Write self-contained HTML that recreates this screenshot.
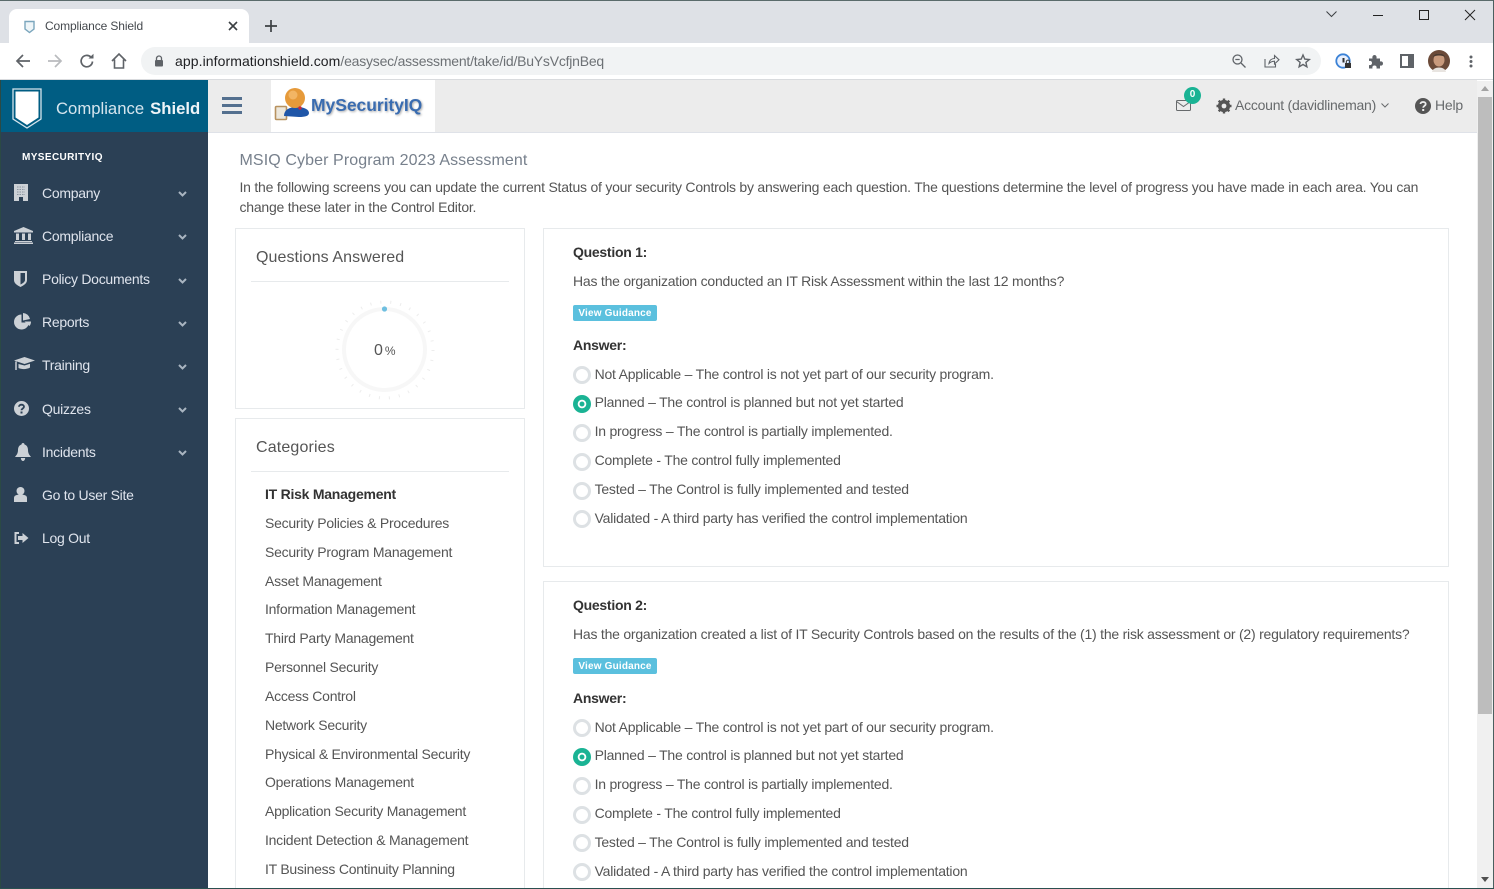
<!DOCTYPE html>
<html><head><meta charset="utf-8"><title>Compliance Shield</title>
<style>
*{box-sizing:border-box}
html,body{margin:0;padding:0;width:1494px;height:889px;overflow:hidden;background:#fff;font-family:"Liberation Sans",Arial,sans-serif;font-size:14px;color:#676a6c}
#w{position:relative;width:1494px;height:889px;overflow:hidden}
.a{position:absolute;white-space:nowrap}
svg{position:absolute;overflow:visible}
.nav{color:#dfe4ed;font-size:14px;left:42px;letter-spacing:-.27px}
.cat{left:265px;color:#555;font-size:14px;letter-spacing:-.245px}
.q{left:573px;color:#333;font-weight:bold;font-size:14px;letter-spacing:-.27px}
.t{color:#555;font-size:14px;left:594.600px;letter-spacing:-.222px}
.r{position:absolute;left:573px;width:18px;height:18px;border-radius:50%;border:3.500px solid #dde1e4;background:#fff}
.r.on{border:0;background:radial-gradient(circle,#1ab394 0,#1ab394 2.2px,#fff 2.7px,#fff 4px,#1ab394 4.5px)}
.box{position:absolute;background:#fff;border:1px solid #e7eaec}
.badge{position:absolute;left:573px;width:84px;height:16px;background:#5bc0de;border-radius:2px;color:#fff;font-weight:bold;font-size:10px;letter-spacing:.18px;line-height:17px;text-align:center}
</style></head><body><div id="w">

<!-- window frame / tab strip -->
<div class="a" style="left:0;top:0;width:1494px;height:43px;background:#dee1e6;border-top:1px solid #5a6b6b"></div>
<div class="a" style="left:9px;top:9px;width:240px;height:34px;background:#fff;border-radius:8px 8px 0 0"></div>
<svg style="left:23px;top:20px" width="13" height="14" viewBox="0 0 13 14"><path d="M2 1.500H11V9L6.500 12.500 2 9Z" fill="#eef5f8" stroke="#7ba6bd" stroke-width="1.400"/></svg>
<div class="a" style="left:45px;top:18px;font-size:12px;color:#45494e;line-height:16px;letter-spacing:-.12px">Compliance Shield</div>
<svg style="left:228px;top:21px" width="10" height="10" viewBox="0 0 10 10"><path d="M1 1L9 9M9 1L1 9" stroke="#3c4043" stroke-width="1.600"/></svg>
<svg style="left:265px;top:20px" width="12" height="12" viewBox="0 0 12 12"><path d="M6 0V12M0 6H12" stroke="#3c4043" stroke-width="1.700"/></svg>
<svg style="left:1326px;top:11px" width="11" height="7" viewBox="0 0 11 7"><path d="M.5 .5L5.500 5.500 10.500 .5" fill="none" stroke="#3c4043" stroke-width="1"/></svg>
<div class="a" style="left:1373px;top:15px;width:10px;height:1px;background:#222"></div>
<div class="a" style="left:1419px;top:10px;width:10px;height:10px;border:1px solid #222"></div>
<svg style="left:1465px;top:10px" width="10" height="10" viewBox="0 0 10 10"><path d="M0 0L10 10M10 0L0 10" stroke="#222" stroke-width="1"/></svg>

<!-- toolbar -->
<div class="a" style="left:0;top:43px;width:1494px;height:37px;background:#fff;border-bottom:1px solid #d9dbde"></div>
<svg style="left:15px;top:53px" width="16" height="16" viewBox="0 0 16 16"><path d="M15 8H2M8 2L2 8 8 14" fill="none" stroke="#5f6368" stroke-width="1.700"/></svg>
<svg style="left:47px;top:53px" width="16" height="16" viewBox="0 0 16 16"><path d="M1 8H14M8 2L14 8 8 14" fill="none" stroke="#b9bbbe" stroke-width="1.700"/></svg>
<svg style="left:79px;top:53px" width="16" height="16" viewBox="0 0 16 16"><path d="M13.500 8.500A5.700 5.700 0 1 1 11.800 4" fill="none" stroke="#5f6368" stroke-width="1.700"/><path d="M9.500 5.500H14.500V.8Z" fill="#5f6368"/></svg>
<svg style="left:111px;top:53px" width="16" height="16" viewBox="0 0 16 16"><path d="M1 8L8 1 15 8M3.500 6.500V15H12.500V6.500" fill="none" stroke="#5f6368" stroke-width="1.600"/></svg>
<div class="a" style="left:141px;top:47px;width:1180px;height:28px;background:#f1f3f4;border-radius:14px"></div>
<svg style="left:154px;top:55px" width="10" height="12" viewBox="0 0 10 12"><path d="M2.500 5V3.500A2.500 2.500 0 0 1 7.500 3.500V5" fill="none" stroke="#5f6368" stroke-width="1.300"/><rect x="1" y="5" width="8" height="6.500" rx="1" fill="#5f6368"/></svg>
<div class="a" style="left:175px;top:53px;font-size:14px;line-height:16px;color:#6d7175;letter-spacing:-.22px"><span style="color:#202124;letter-spacing:.08px">app.informationshield.com</span>/easysec/assessment/take/id/BuYsVcfjnBeq</div>
<svg style="left:1232px;top:54px" width="14" height="14" viewBox="0 0 14 14"><circle cx="5.500" cy="5.500" r="4.500" fill="none" stroke="#5f6368" stroke-width="1.300"/><path d="M9 9L13.500 13.500M3.300 5.500H7.700" stroke="#5f6368" stroke-width="1.300"/></svg>
<svg style="left:1264px;top:54px" width="15" height="14" viewBox="0 0 15 14"><path d="M1 5V13H11.500V10M5 9.500C5.500 6 8 4.500 10.500 4.500V1.500L15 5.800 10.500 10V7.200C8 7.200 6.500 8 5 9.500Z" fill="none" stroke="#5f6368" stroke-width="1.100"/></svg>
<svg style="left:1296px;top:54px" width="14" height="14" viewBox="0 0 14 14"><path d="M7 1L8.800 5.100 13.300 5.500 9.900 8.400 10.900 12.800 7 10.500 3.100 12.800 4.100 8.400.7 5.500 5.200 5.100Z" fill="none" stroke="#5f6368" stroke-width="1.400"/></svg>
<svg style="left:1335px;top:53px" width="17" height="17" viewBox="0 0 17 17"><circle cx="8" cy="8" r="6.700" fill="#e8f0fe" stroke="#3b82d6" stroke-width="1.800"/><path d="M8.500 5V9.500" stroke="#333" stroke-width="2"/><rect x="10" y="10" width="6" height="5" fill="#333"/><path d="M11.300 10V8.800A1.700 1.700 0 0 1 14.700 8.800V10" fill="none" stroke="#333"/></svg>
<svg style="left:1368px;top:54px" width="15" height="15" viewBox="0 0 15 15"><path d="M1 4.500H4.500C4 2.500 5 1 6.500 1S9 2.500 8.500 4.500H12V7.500C14 7 15 8 15 9.500S14 12 12 11.500V14.500H8.500C9 12.500 8 11.500 6.500 11.500S4 12.500 4.500 14.500H1V11C3 11.500 4 10.500 4 9S3 6.500 1 7Z" fill="#5f6368"/></svg>
<svg style="left:1400px;top:54px" width="14" height="14" viewBox="0 0 14 14"><rect x="1" y="1" width="12" height="12" fill="#fff" stroke="#5f6368" stroke-width="2"/><rect x="8" y="1" width="5" height="12" fill="#5f6368"/></svg>
<svg style="left:1428px;top:50px" width="22" height="22" viewBox="0 0 22 22"><circle cx="11" cy="11" r="11" fill="#6b4a38"/><ellipse cx="11" cy="10" rx="5.500" ry="6.500" fill="#c99a7c"/><path d="M5 7C6 2.500 16 2.500 17 7 14 5 8 5 5 7Z" fill="#4a3a30"/><path d="M4 22C5 16 17 16 18 22Z" fill="#e8e4e0"/></svg>
<svg style="left:1469px;top:55px" width="4" height="13" viewBox="0 0 4 13"><circle cx="2" cy="2" r="1.500" fill="#5f6368"/><circle cx="2" cy="6.500" r="1.500" fill="#5f6368"/><circle cx="2" cy="11" r="1.500" fill="#5f6368"/></svg>

<!-- app topbar -->
<div class="a" style="left:208px;top:80px;width:1269px;height:53px;background:#ececec;border-bottom:1px solid #dfe2e8"></div>
<div class="a" style="left:1px;top:80px;width:207px;height:52px;background:#005d83"></div>
<div class="a" style="left:0;top:80px;width:1px;height:809px;background:#2b4a45"></div>
<svg style="left:12px;top:88px" width="30" height="41" viewBox="0 0 30 41"><path d="M1 1H29V31L15 40 1 31Z" fill="#005d83" stroke="#d5e4ec" stroke-width="1.300"/><path d="M3.500 3.500H26.500V29.500L15 37 3.500 29.500Z" fill="#fff"/></svg>
<div class="a" style="left:56px;top:98px;font-size:16.700px;word-spacing:1.400px;line-height:22px;color:#d5e5ee">Compliance <b style="color:#eef4f8">Shield</b></div>
<div class="a" style="left:222px;top:97px;width:20px;height:3px;background:#54708f;box-shadow:0 7px 0 #54708f,0 14px 0 #54708f"></div>
<div class="a" style="left:271px;top:80px;width:164px;height:52px;background:#fff"></div>
<!-- logo -->
<svg style="left:274px;top:85px" width="40" height="36" viewBox="0 0 40 36"><rect x="1.500" y="21.500" width="11" height="13" rx="1" fill="#ece7dc" stroke="#b8925f" stroke-width="1.600"/><path d="M10 31C10 25 15 22 23 22S35 25 35 28C35 31 31 32 25 32Z" fill="#1f56a8"/><circle cx="21" cy="13" r="10" fill="#e69a3a"/><circle cx="19" cy="10" r="4.500" fill="#f2b564"/><circle cx="26" cy="23" r="1.700" fill="#c8283a"/></svg>
<div class="a" style="left:311px;top:94px;font-size:17.500px;line-height:23px;font-weight:bold;color:#3a6cb0;letter-spacing:-.05px;text-shadow:1px 1px 2px #aaa">MySecurityIQ</div>
<!-- top right -->
<svg style="left:1176px;top:100px" width="15" height="11" viewBox="0 0 15 11"><rect x=".5" y=".5" width="14" height="10" rx="1" fill="none" stroke="#676a6c"/><path d="M.5 1.500L7.500 6.500 14.500 1.500" fill="none" stroke="#676a6c"/></svg>
<div class="a" style="left:1184px;top:87px;width:17px;height:17px;background:#1ab394;border-radius:50%;color:#fff;font-size:10px;font-weight:bold;line-height:16px;text-align:center">0</div>
<svg style="left:1216px;top:98px" width="16" height="16" viewBox="0 0 16 16"><circle cx="8" cy="8" r="4.500" fill="none" stroke="#555" stroke-width="3.200"/><path d="M8 .5V15.500M.5 8H15.500M2.700 2.700L13.300 13.300M13.300 2.700L2.700 13.300" stroke="#555" stroke-width="2.400"/><circle cx="8" cy="8" r="2.400" fill="#ececec"/></svg>
<div class="a" style="left:1235px;top:97px;font-size:14px;line-height:16px;color:#676a6c;letter-spacing:-.24px">Account (davidlineman)</div>
<svg style="left:1381px;top:103px" width="8" height="5" viewBox="0 0 8 5"><path d="M.5 .5L4 4 7.500 .5" fill="none" stroke="#676a6c" stroke-width="1"/></svg>
<svg style="left:1415px;top:98px" width="16" height="16" viewBox="0 0 16 16"><circle cx="8" cy="8" r="8" fill="#555"/><path d="M5.500 6C5.500 3.300 10.700 3.300 10.700 6 10.700 7.800 8.200 7.800 8.200 9.800" fill="none" stroke="#ececec" stroke-width="1.800"/><rect x="7.200" y="11" width="2" height="2" fill="#ececec"/></svg>
<div class="a" style="left:1435px;top:97px;font-size:14px;line-height:16px;color:#676a6c;letter-spacing:-.2px">Help</div>

<!-- sidebar -->
<div class="a" style="left:1px;top:132px;width:207px;height:757px;background:#2b4055"></div>
<div class="a" style="left:22px;top:152px;font-size:10px;line-height:12px;font-weight:bold;color:#fff;letter-spacing:.4px">MYSECURITYIQ</div>

<div class="a nav" style="top:185px;line-height:16px">Company</div>
<div class="a nav" style="top:228px;line-height:16px">Compliance</div>
<div class="a nav" style="top:271px;line-height:16px">Policy Documents</div>
<div class="a nav" style="top:314px;line-height:16px">Reports</div>
<div class="a nav" style="top:357px;line-height:16px">Training</div>
<div class="a nav" style="top:401px;line-height:16px">Quizzes</div>
<div class="a nav" style="top:444px;line-height:16px">Incidents</div>
<div class="a nav" style="top:487px;line-height:16px">Go to User Site</div>
<div class="a nav" style="top:530px;line-height:16px">Log Out</div>

<svg style="left:178px;top:191px" width="9" height="6" viewBox="0 0 9 6"><path d="M1 1L4.500 4.500 8 1" fill="none" stroke="#a9b5c1" stroke-width="2"/></svg>
<svg style="left:178px;top:234px" width="9" height="6" viewBox="0 0 9 6"><path d="M1 1L4.500 4.500 8 1" fill="none" stroke="#a9b5c1" stroke-width="2"/></svg>
<svg style="left:178px;top:278px" width="9" height="6" viewBox="0 0 9 6"><path d="M1 1L4.500 4.500 8 1" fill="none" stroke="#a9b5c1" stroke-width="2"/></svg>
<svg style="left:178px;top:321px" width="9" height="6" viewBox="0 0 9 6"><path d="M1 1L4.500 4.500 8 1" fill="none" stroke="#a9b5c1" stroke-width="2"/></svg>
<svg style="left:178px;top:364px" width="9" height="6" viewBox="0 0 9 6"><path d="M1 1L4.500 4.500 8 1" fill="none" stroke="#a9b5c1" stroke-width="2"/></svg>
<svg style="left:178px;top:407px" width="9" height="6" viewBox="0 0 9 6"><path d="M1 1L4.500 4.500 8 1" fill="none" stroke="#a9b5c1" stroke-width="2"/></svg>
<svg style="left:178px;top:450px" width="9" height="6" viewBox="0 0 9 6"><path d="M1 1L4.500 4.500 8 1" fill="none" stroke="#a9b5c1" stroke-width="2"/></svg>

<!-- sidebar icons -->
<svg style="left:14px;top:184px" width="14" height="17" viewBox="0 0 14 17"><rect width="14" height="17" fill="#ccd1d6"/><path d="M3 3H11M3 5.500H11M3 8H11M3 10.500H11" stroke="#8b95a0" stroke-dasharray="1.500 1"/><rect x="5" y="13" width="4" height="4" fill="#2b4055"/></svg>
<svg style="left:14px;top:227px" width="19" height="17" viewBox="0 0 19 17"><path d="M9.500 0L19 4V5.500H0V4Z" fill="#ccd1d6"/><path d="M2 6.500H5V13H2ZM8 6.500H11V13H8ZM14 6.500H17V13H14ZM1 14H18V15H1ZM0 15.500H19V17H0Z" fill="#ccd1d6"/></svg>
<svg style="left:14px;top:271px" width="13" height="16" viewBox="0 0 13 16"><path d="M0 0H13V9C13 12.500 9.500 14.500 6.500 16 3.500 14.500 0 12.500 0 9Z" fill="#ccd1d6"/><path d="M6.500 2H11V9C11 11 8.500 12.500 6.500 13.500Z" fill="#2b4055"/></svg>
<svg style="left:14px;top:313px" width="17" height="17" viewBox="0 0 17 17"><path d="M7.500 1.500A7.500 7.500 0 1 0 15 9.500H7.500Z" fill="#ccd1d6"/><path d="M9 0A7.500 7.500 0 0 1 16 6L9 7.500Z" fill="#ccd1d6"/><path d="M10.500 8.500H17A7 7 0 0 1 15.500 13Z" fill="#ccd1d6"/></svg>
<svg style="left:14px;top:357px" width="21" height="15" viewBox="0 0 21 15"><path d="M10.500 0L21 3.500 10.500 7 0 3.500Z" fill="#ccd1d6"/><path d="M4.500 7V11C7.500 12.500 13 12.500 16 10.500V6.800L10.500 8.500Z" fill="#ccd1d6"/><path d="M2 4.500V13" stroke="#ccd1d6" stroke-width="1.500"/></svg>
<svg style="left:14px;top:401px" width="15" height="15" viewBox="0 0 15 15"><circle cx="7.500" cy="7.500" r="7.500" fill="#ccd1d6"/><path d="M5 5.800C5 3 10 3 10 5.800 10 7.500 7.500 7.500 7.500 9.300" fill="none" stroke="#2b4055" stroke-width="1.800"/><rect x="6.500" y="10.500" width="2" height="2" fill="#2b4055"/></svg>
<svg style="left:15px;top:443px" width="16" height="18" viewBox="0 0 16 18"><path d="M8 0C9 0 9.500 .7 9.500 1.500 12 2.300 13 4.500 13 7 13 10.500 14.500 12 16 14H0C1.500 12 3 10.500 3 7 3 4.500 4 2.300 6.500 1.500 6.500 .7 7 0 8 0ZM5.800 15H10.200C10 17 9 18 8 18S6 17 5.800 15Z" fill="#ccd1d6"/></svg>
<svg style="left:14px;top:487px" width="13" height="15" viewBox="0 0 13 15"><circle cx="6.500" cy="4" r="4" fill="#ccd1d6"/><path d="M0 15V11C0 8.500 2.500 7.500 6.500 7.500S13 8.500 13 11V15Z" fill="#ccd1d6"/></svg>
<svg style="left:14px;top:532px" width="15" height="12" viewBox="0 0 15 12"><path d="M5 1H1.500V11H5" fill="none" stroke="#ccd1d6" stroke-width="2"/><path d="M4 4H8.500V1L14.500 6 8.500 11V8H4Z" fill="#ccd1d6"/></svg>

<!-- content -->
<div class="a" style="left:208px;top:133px;width:1269px;height:756px;background:#fff"></div>
<div class="a" style="left:239.500px;top:150.500px;font-size:16px;line-height:20px;color:#77808c;letter-spacing:.1px">MSIQ Cyber Program 2023 Assessment</div>
<div class="a" style="left:239.500px;top:177px;font-size:14px;line-height:20px;color:#555;letter-spacing:-.225px">In the following screens you can update the current Status of your security Controls by answering each question. The questions determine the level of progress you have made in each area. You can<br>change these later in the Control Editor.</div>

<!-- Questions answered -->
<div class="box" style="left:235px;top:228px;width:290px;height:181px"></div>
<div class="a" style="left:256px;top:248px;font-size:16px;line-height:20px;color:#555;letter-spacing:.08px">Questions Answered</div>
<div class="a" style="left:251px;top:281px;width:258px;height:1px;background:#e7eaec"></div>
<div class="a" style="left:342px;top:307px;width:85px;height:85px;border:4.500px solid #f7f7f7;border-radius:50%"></div>
<svg style="left:335px;top:300px" width="100" height="100" viewBox="0 0 100 100">
<circle cx="50" cy="50" r="48" fill="none" stroke="#ededed" stroke-width="3" stroke-dasharray="1 9.050"/>
<circle cx="49.500" cy="9" r="2.600" fill="#6fbfe0"/>
</svg>
<div class="a" style="left:374px;top:341px;font-size:16px;line-height:20px;color:#555">0<span style="font-size:12px;margin-left:2px">%</span></div>

<!-- Categories -->
<div class="box" style="left:235px;top:418px;width:290px;height:480px"></div>
<div class="a" style="left:256px;top:438px;font-size:16px;line-height:20px;color:#555;letter-spacing:.15px">Categories</div>
<div class="a" style="left:251px;top:471px;width:258px;height:1px;background:#e7eaec"></div>
<div class="a cat" style="top:486px;line-height:16px;color:#333;font-weight:bold">IT Risk Management</div>
<div class="a cat" style="top:515px;line-height:16px">Security Policies &amp; Procedures</div>
<div class="a cat" style="top:544px;line-height:16px">Security Program Management</div>
<div class="a cat" style="top:573px;line-height:16px">Asset Management</div>
<div class="a cat" style="top:601px;line-height:16px">Information Management</div>
<div class="a cat" style="top:630px;line-height:16px">Third Party Management</div>
<div class="a cat" style="top:659px;line-height:16px">Personnel Security</div>
<div class="a cat" style="top:688px;line-height:16px">Access Control</div>
<div class="a cat" style="top:717px;line-height:16px">Network Security</div>
<div class="a cat" style="top:746px;line-height:16px">Physical &amp; Environmental Security</div>
<div class="a cat" style="top:774px;line-height:16px">Operations Management</div>
<div class="a cat" style="top:803px;line-height:16px">Application Security Management</div>
<div class="a cat" style="top:832px;line-height:16px">Incident Detection &amp; Management</div>
<div class="a cat" style="top:861px;line-height:16px">IT Business Continuity Planning</div>

<!-- Question 1 -->
<div class="box" style="left:543px;top:228px;width:906px;height:339px"></div>
<div class="a q" style="top:244px;line-height:16px">Question 1:</div>
<div class="a t" style="left:573px;top:273px;line-height:16px">Has the organization conducted an IT Risk Assessment within the last 12 months?</div>
<div class="badge" style="top:305px">View Guidance</div>
<div class="a q" style="top:337px;line-height:16px">Answer:</div>
<div class="r" style="top:366px"></div><div class="a t" style="top:366px;line-height:16px">Not Applicable – The control is not yet part of our security program.</div>
<div class="r on" style="top:395px"></div><div class="a t" style="top:394px;line-height:16px">Planned – The control is planned but not yet started</div>
<div class="r" style="top:424px"></div><div class="a t" style="top:423px;line-height:16px">In progress – The control is partially implemented.</div>
<div class="r" style="top:453px"></div><div class="a t" style="top:452px;line-height:16px">Complete - The control fully implemented</div>
<div class="r" style="top:482px"></div><div class="a t" style="top:481px;line-height:16px">Tested – The Control is fully implemented and tested</div>
<div class="r" style="top:510px"></div><div class="a t" style="top:510px;line-height:16px">Validated - A third party has verified the control implementation</div>

<!-- Question 2 -->
<div class="box" style="left:543px;top:581px;width:906px;height:330px"></div>
<div class="a q" style="top:597px;line-height:16px">Question 2:</div>
<div class="a t" style="left:573px;top:626px;line-height:16px">Has the organization created a list of IT Security Controls based on the results of the (1) the risk assessment or (2) regulatory requirements?</div>
<div class="badge" style="top:658px">View Guidance</div>
<div class="a q" style="top:690px;line-height:16px">Answer:</div>
<div class="r" style="top:719px"></div><div class="a t" style="top:719px;line-height:16px">Not Applicable – The control is not yet part of our security program.</div>
<div class="r on" style="top:748px"></div><div class="a t" style="top:747px;line-height:16px">Planned – The control is planned but not yet started</div>
<div class="r" style="top:777px"></div><div class="a t" style="top:776px;line-height:16px">In progress – The control is partially implemented.</div>
<div class="r" style="top:806px"></div><div class="a t" style="top:805px;line-height:16px">Complete - The control fully implemented</div>
<div class="r" style="top:834px"></div><div class="a t" style="top:834px;line-height:16px">Tested – The Control is fully implemented and tested</div>
<div class="r" style="top:863px"></div><div class="a t" style="top:863px;line-height:16px">Validated - A third party has verified the control implementation</div>

<!-- scrollbar -->
<div class="a" style="left:1477px;top:81px;width:16px;height:808px;background:#f0f0f0"></div>
<div class="a" style="left:1478px;top:97px;width:14px;height:617px;background:#bdbdbd"></div>
<svg style="left:1481px;top:86px" width="8" height="5" viewBox="0 0 8 5"><path d="M4 0L8 5H0Z" fill="#a3a3a3"/></svg>
<svg style="left:1481px;top:877px" width="8" height="5" viewBox="0 0 8 5"><path d="M0 0H8L4 5Z" fill="#505050"/></svg>
<div class="a" style="left:1493px;top:0;width:1px;height:889px;background:#4a5f5f"></div>
<div class="a" style="left:0;top:888px;width:1494px;height:1px;background:#2b5050"></div>
</div></body></html>
